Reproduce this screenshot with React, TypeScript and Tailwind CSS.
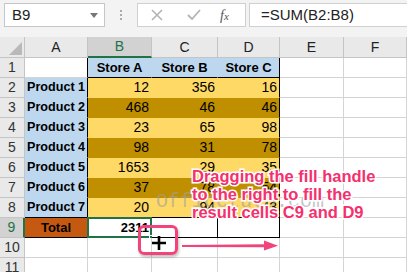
import React from 'react';

const W = ['w-[63px]', 'w-[64px]', 'w-[66px]', 'w-[62px]', 'w-[64px]', 'w-[63px]'];
const LETTERS = ['A', 'B', 'C', 'D', 'E', 'F'];

type CellP = {
  i: number;
  cls?: string;
  children?: React.ReactNode;
};

function Cell({ i, cls = 'border-[#d4d4d4] bg-white', children }: CellP) {
  return (
    <div className={`${W[i]} h-[20px] shrink-0 border-r border-b flex items-center px-[2px] relative whitespace-nowrap ${cls}`}>
      {children}
    </div>
  );
}

function RowHead({ n, selected }: { n: number; selected?: boolean }) {
  return (
    <div
      className={
        selected
          ? 'w-[25px] h-[20px] shrink-0 border-b border-r-2 border-b-[#c4c4c4] border-r-[#217346] bg-[#d2d2d2] text-[#217346] flex items-center justify-center text-[14px]'
          : 'w-[25px] h-[20px] shrink-0 border-b border-r border-[#c4c4c4] bg-[#e9e9e9] text-[#333] flex items-center justify-center text-[14px]'
      }
    >
      {n}
    </div>
  );
}

const DATA = [
  ['12', '356', '16'],
  ['468', '46', '46'],
  ['23', '65', '98'],
  ['98', '31', '78'],
  ['1653', '29', '35'],
  ['37', '78', '54'],
  ['20', '94', '43'],
];

export default function App() {
  return (
    <div className="w-[407px] h-[272px] overflow-hidden relative bg-white font-['Liberation_Sans',Arial,sans-serif] text-black">
      {/* toolbar */}
      <div className="h-[37px] bg-[#f3f3f3] flex items-start pt-[3px] pl-[4px]">
        <div className="w-[101px] h-[24px] bg-white border border-[#c6c6c6] flex items-center pl-[7px] pr-[6px] text-[15px] text-[#222]">
          <span className="flex-1">B9</span>
          <span className="w-0 h-0 border-l-[4px] border-r-[4px] border-t-[5px] border-l-transparent border-r-transparent border-t-[#777]" />
        </div>
        <div className="w-[32px] h-[24px] flex flex-col items-center justify-center gap-[2px]">
          <span className="w-[2px] h-[2px] bg-[#aaa]" />
          <span className="w-[2px] h-[2px] bg-[#aaa]" />
          <span className="w-[2px] h-[2px] bg-[#aaa]" />
        </div>
        <div className="w-[109px] h-[24px] bg-white border border-[#d0d0d0] flex items-center">
          <svg width="14" height="14" viewBox="0 0 14 14" className="ml-[12px]">
            <path d="M2 2 L12 12 M12 2 L2 12" stroke="#b4b4b4" strokeWidth="1.6" fill="none" />
          </svg>
          <svg width="16" height="14" viewBox="0 0 16 14" className="ml-[22px]">
            <path d="M2 7 L6 11 L14 2" stroke="#b4b4b4" strokeWidth="1.8" fill="none" />
          </svg>
          <span className="ml-[18px] text-[14px] italic font-['Liberation_Serif',serif] text-[#555]">
            f<span className="text-[11px]">x</span>
          </span>
        </div>
        <div className="ml-[3px] flex-1 h-[24px] bg-white border-y border-l border-[#d0d0d0] flex items-center pl-[11px] text-[15px] text-[#222]">
          =SUM(B2:B8)
        </div>
      </div>

      {/* column headers */}
      <div className="flex h-[21px]">
        <div className="w-[25px] h-[21px] shrink-0 bg-[#e9e9e9] border-r border-b border-[#c4c4c4] relative">
          <svg className="absolute right-[2px] bottom-[2px]" width="13" height="13" viewBox="0 0 13 13">
            <path d="M13 0 L13 13 L0 13 Z" fill="#b9b9b9" />
          </svg>
        </div>
        {LETTERS.map((l, i) =>
          i === 1 ? (
            <div key={l} className={`${W[i]} h-[21px] shrink-0 bg-[#d2d2d2] border-r border-r-[#c4c4c4] border-b-2 border-b-[#217346] flex items-center justify-center text-[14px] text-[#217346]`}>
              {l}
            </div>
          ) : (
            <div key={l} className={`${W[i]} h-[21px] shrink-0 bg-[#e9e9e9] border-r border-b border-[#c4c4c4] flex items-center justify-center text-[14px] text-[#222]`}>
              {l}
            </div>
          )
        )}
      </div>

      {/* row 1 */}
      <div className="flex">
        <RowHead n={1} />
        <Cell i={0} cls="bg-white border-b-[#d4d4d4] border-r-black" />
        <Cell i={1} cls="bg-[#bdd7ee] border-r-[#bdd7ee] border-b-black justify-center font-bold text-[13px]">Store A</Cell>
        <Cell i={2} cls="bg-[#bdd7ee] border-r-[#bdd7ee] border-b-black justify-center font-bold text-[13px]">Store B</Cell>
        <Cell i={3} cls="bg-[#bdd7ee] border-r-black border-b-black justify-center font-bold text-[13px]">Store C</Cell>
        <Cell i={4} />
        <Cell i={5} />
      </div>

      {DATA.map((r, k) => {
        const dark = k % 2 === 1;
        const last = k === DATA.length - 1;
        const bg = dark ? 'bg-[#bf8f00]' : 'bg-[#ffd966]';
        const br = dark ? 'border-r-[#bf8f00]' : 'border-r-[#ffd966]';
        const bb = last ? 'border-b-black' : dark ? 'border-b-[#bf8f00]' : 'border-b-[#ffd966]';
        return (
          <div className="flex" key={k}>
            <RowHead n={k + 2} />
            <Cell i={0} cls={`bg-[#bdd7ee] border-r-black ${last ? 'border-b-black' : 'border-b-[#bdd7ee]'} font-bold text-[12.6px] overflow-hidden`}>
              Product {k + 1}
            </Cell>
            <Cell i={1} cls={`${bg} ${br} ${bb} justify-end text-[14px]`}>{r[0]}</Cell>
            <Cell i={2} cls={`${bg} ${br} ${bb} justify-end text-[14px]`}>{r[1]}</Cell>
            <Cell i={3} cls={`${bg} border-r-black ${bb} justify-end text-[14px]`}>{r[2]}</Cell>
            <Cell i={4} />
            <Cell i={5} />
          </div>
        );
      })}

      {/* row 9 */}
      <div className="flex">
        <RowHead n={9} selected />
        <Cell i={0} cls="bg-[#c65911] border-r-black border-b-black justify-center font-bold text-[13px]">Total</Cell>
        <Cell i={1} cls="bg-white border-r-black border-b-black justify-end font-bold text-[13px]">
          2311
          <span className="absolute -left-[1px] -top-[1px] -right-[1px] -bottom-[1px] border-2 border-[#217346]" />
          <span className="absolute -right-[4px] -bottom-[4px] w-[6px] h-[6px] bg-[#217346] border border-white" />
        </Cell>
        <Cell i={2} cls="bg-white border-r-black border-b-black" />
        <Cell i={3} cls="bg-white border-r-black border-b-black" />
        <Cell i={4} />
        <Cell i={5} />
      </div>

      {[10, 11].map((n) => (
        <div className="flex" key={n}>
          <RowHead n={n} />
          {LETTERS.map((l, i) => (
            <Cell key={l} i={i} />
          ))}
        </div>
      ))}

      {/* watermark */}
      <div className="absolute left-[156px] top-[190px] text-[20px] leading-[24px] font-['Liberation_Mono',monospace] text-[#a0a0a0] opacity-60 whitespace-nowrap">
        Officetuto.com
      </div>

      {/* annotation text */}
      <div className="absolute left-[192px] top-[167px] text-[16.5px] leading-[18px] font-bold text-[#f4306e] whitespace-nowrap [-webkit-text-stroke:3px_white] [paint-order:stroke_fill]">
        <div>Dragging the fill handle</div>
        <div>to the right to fill the</div>
        <div>result cells C9 and D9</div>
      </div>

      {/* fill handle highlight */}
      <div className="absolute left-[138px] top-[225px] w-[40px] h-[30px] rounded-[6px] border-[3px] border-[#f0447a] shadow-[1px_2px_3px_rgba(0,0,0,0.25)]" />
      <svg className="absolute left-[151px] top-[235px]" width="16" height="16" viewBox="0 0 16 16">
        <path d="M8 1 V15 M1 8 H15" stroke="#000" strokeWidth="2.6" />
      </svg>

      {/* arrow */}
      <svg className="absolute left-[180px] top-[239px]" width="100" height="14" viewBox="0 0 100 14">
        <path d="M2 6 L86 5.2 L86 8.2 L2 8 Z" fill="#f0447a" />
        <path d="M84 1.5 L98 6.7 L84 11.5 Z" fill="#f0447a" />
      </svg>
    </div>
  );
}
